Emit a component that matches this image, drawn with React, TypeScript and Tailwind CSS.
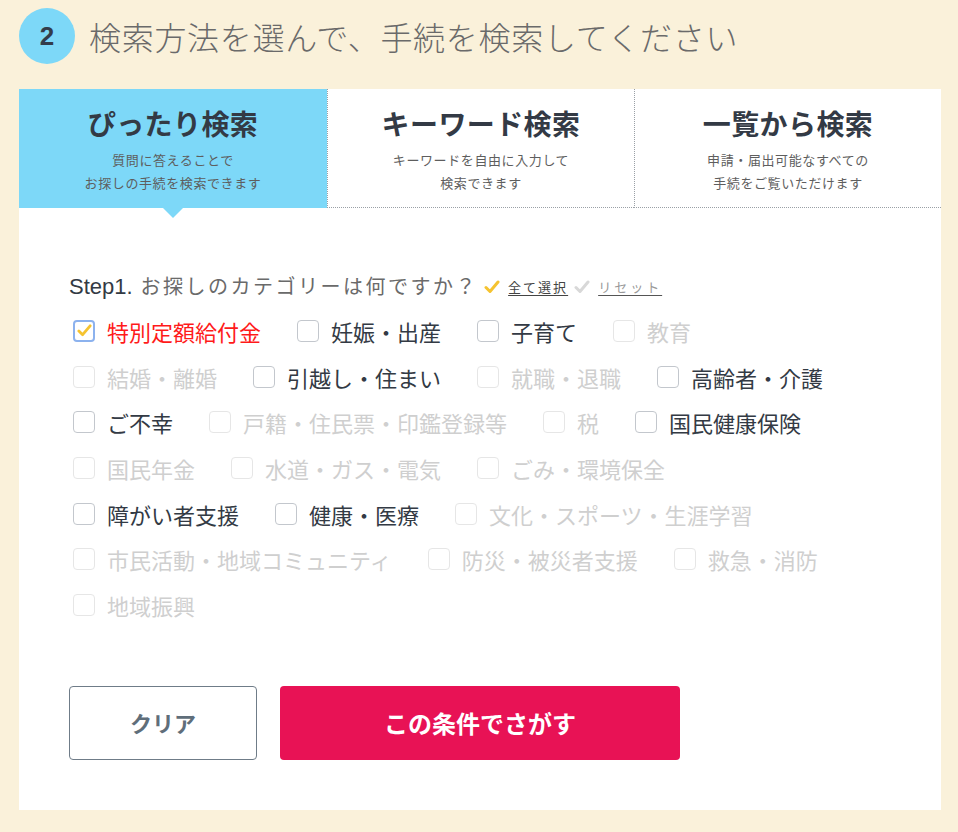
const jp = { fontFamily: '"Noto Sans CJK JP", "Noto Sans", sans-serif' };

type Item = { label: string; state: "checked" | "on" | "off" };

const rows: Item[][] = [
    [
        { label: "特別定額給付金", state: "checked" },
        { label: "妊娠・出産", state: "on" },
        { label: "子育て", state: "on" },
        { label: "教育", state: "off" },
    ],
    [
        { label: "結婚・離婚", state: "off" },
        { label: "引越し・住まい", state: "on" },
        { label: "就職・退職", state: "off" },
        { label: "高齢者・介護", state: "on" },
    ],
    [
        { label: "ご不幸", state: "on" },
        { label: "戸籍・住民票・印鑑登録等", state: "off" },
        { label: "税", state: "off" },
        { label: "国民健康保険", state: "on" },
    ],
    [
        { label: "国民年金", state: "off" },
        { label: "水道・ガス・電気", state: "off" },
        { label: "ごみ・環境保全", state: "off" },
    ],
    [
        { label: "障がい者支援", state: "on" },
        { label: "健康・医療", state: "on" },
        { label: "文化・スポーツ・生涯学習", state: "off" },
    ],
    [
        { label: "市民活動・地域コミュニティ", state: "off" },
        { label: "防災・被災者支援", state: "off" },
        { label: "救急・消防", state: "off" },
    ],
    [{ label: "地域振興", state: "off" }],
];

const Check = ({ color, size = 16 }: { color: string; size?: number }) => (
    <svg width={size} height={size} viewBox="0 0 16 16" fill="none">
        <path d="M2 8.5 L6 12.5 L14 3" stroke={color} strokeWidth="3" strokeLinecap="round" strokeLinejoin="round" />
    </svg>
);

const CheckItem = ({ item }: { item: Item }) => {
    const box =
        item.state === "checked"
            ? "border-2 border-[#8cb2ee]"
            : item.state === "on"
              ? "border border-[#c3c7cd]"
              : "border border-[#e6e6e6]";
    const text =
        item.state === "checked" ? "text-[#ff1a1a]" : item.state === "on" ? "text-[#333a44]" : "text-[#cfcfcf]";
    return (
        <div className="flex items-center mr-[36px]">
            <span className={`w-[22px] h-[22px] rounded-[4px] bg-white flex items-center justify-center ${box}`}>
                {item.state === "checked" && <Check color="#f5c330" size={15} />}
            </span>
            <span className={`ml-[12px] text-[22px] leading-none whitespace-nowrap ${text}`}>{item.label}</span>
        </div>
    );
};

const tabs = [
    { title: "ぴったり検索", sub: ["質問に答えることで", "お探しの手続を検索できます"] },
    { title: "キーワード検索", sub: ["キーワードを自由に入力して", "検索できます"] },
    { title: "一覧から検索", sub: ["申請・届出可能なすべての", "手続をご覧いただけます"] },
];

const App = () => {
    return (
        <div className="w-[958px] h-[832px] bg-[#faf1da] overflow-hidden" style={jp}>
            <div className="flex items-center pl-[19px] pt-[8px]">
                <div className="w-[56px] h-[56px] rounded-full bg-[#7dd8f8] flex items-center justify-center">
                    <span className="text-[26px] font-bold text-[#333c4a]" style={{ fontFamily: '"Liberation Sans", sans-serif' }}>
                        2
                    </span>
                </div>
                <h1 className="ml-[14px] text-[32px] font-light text-[#6a6a6a] leading-none tracking-[0.7px]">
                    検索方法を選んで、手続を検索してください
                </h1>
            </div>

            <div className="mx-[19px] mt-[25px] w-[922px] bg-white">
                <div className="flex">
                    {tabs.map((t, i) => (
                        <div
                            key={t.title}
                            className={`relative h-[119px] pt-[16px] flex flex-col items-center ${
                                i === 0
                                    ? "w-[308px] bg-[#7dd8f8]"
                                    : "w-[307px] border-l border-b border-dotted border-[#9aa0a6]"
                            }`}
                        >
                            <div className="text-[28px] font-bold leading-[36px] tracking-[0.4px] text-[#333a45]">{t.title}</div>
                            <div className="mt-[7px] text-[13px] leading-[23px] tracking-[0.6px] text-[#5e5e5e] text-center">
                                {t.sub[0]}
                                <br />
                                {t.sub[1]}
                            </div>
                            {i === 0 && (
                                <span className="absolute left-1/2 -translate-x-1/2 top-full w-0 h-0 border-l-[10px] border-r-[10px] border-t-[10px] border-l-transparent border-r-transparent border-t-[#7dd8f8]" />
                            )}
                        </div>
                    ))}
                </div>

                <div className="px-[50px] pt-[55px] pb-[50px]">
                    <div className="h-[46px] flex items-center">
                        <span className="text-[22px] text-[#333a44]" style={{ fontFamily: '"Liberation Sans", sans-serif' }}>
                            Step1.
                        </span>
                        <span className="ml-[8px] text-[20px] tracking-[2.5px] text-[#6a6a6a]">お探しのカテゴリーは何ですか？</span>
                        <span className="ml-[6px] mt-[2px] flex items-center">
                            <Check color="#f5c330" />
                            <span className="ml-[8px] text-[13px] tracking-[2px] text-[#444] underline underline-offset-[3px]">
                                全て選択
                            </span>
                            <span className="ml-[6px]">
                                <Check color="#d8d8d8" />
                            </span>
                            <span className="ml-[8px] text-[13px] tracking-[3px] text-[#999] underline underline-offset-[3px] decoration-[#555]">
                                リセット
                            </span>
                        </span>
                    </div>

                    <div className="pl-[4px] -mt-[1px]">
                        {rows.map((r, i) => (
                            <div key={i} className="h-[45.7px] flex items-center">
                                {r.map((it) => (
                                    <CheckItem key={it.label} item={it} />
                                ))}
                            </div>
                        ))}
                    </div>

                    <div className="mt-[58px] flex gap-[23px]">
                        <button className="w-[188px] h-[74px] rounded-[4px] border border-[#6f7c88] bg-white text-[22px] font-bold text-[#5f6e7a]">
                            クリア
                        </button>
                        <button className="w-[400px] h-[74px] rounded-[4px] bg-[#e81255] text-[24px] font-bold text-white">
                            この条件でさがす
                        </button>
                    </div>
                </div>
            </div>
        </div>
    );
};

export default App;
